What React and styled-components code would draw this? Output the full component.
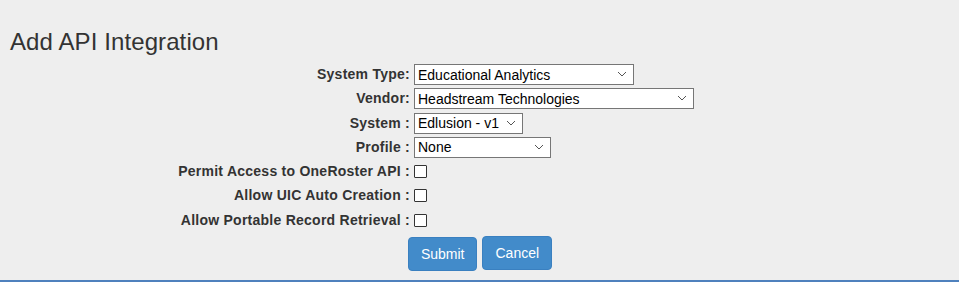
import React from "react";
import styled, { createGlobalStyle } from "styled-components";

const GlobalStyle = createGlobalStyle`
  html, body {
    margin: 0;
    padding: 0;
    background: #eeeeee;
  }
  * {
    box-sizing: border-box;
  }
`;

const selects = [
  { label: "System Type:", value: "Educational Analytics", width: 220 },
  { label: "Vendor:", value: "Headstream Technologies", width: 280 },
  { label: "System :", value: "Edlusion - v1", width: 109 },
  { label: "Profile :", value: "None", width: 137 },
];

const checks = [
  "Permit Access to OneRoster API :",
  "Allow UIC Auto Creation :",
  "Allow Portable Record Retrieval :",
];

const Chevron = () => (
  <svg width="10" height="6" viewBox="0 0 10 6">
    <path d="M1 1 L5 5 L9 1" fill="none" stroke="#555" strokeWidth="1" />
  </svg>
);

const App = () => {
  return (
    <Page>
      <GlobalStyle />
      <Title>Add API Integration</Title>
      <Form>
        {selects.map((s) => (
          <React.Fragment key={s.label}>
            <Label>{s.label}</Label>
            <Field>
              <SelectWrap $width={s.width}>
                <Select defaultValue={s.value}>
                  <option>{s.value}</option>
                </Select>
                <Arrow>
                  <Chevron />
                </Arrow>
              </SelectWrap>
            </Field>
          </React.Fragment>
        ))}
        {checks.map((c) => (
          <React.Fragment key={c}>
            <Label>{c}</Label>
            <Field>
              <Check type="checkbox" />
            </Field>
          </React.Fragment>
        ))}
      </Form>
      <Actions>
        <Button $drop>Submit</Button>
        <Button>Cancel</Button>
      </Actions>
    </Page>
  );
};

const Page = styled.div`
  height: 282px;
  background: #eeeeee;
  border-bottom: 2px solid #4f81bd;
  font-family: "Liberation Sans", Arial, sans-serif;
  color: #333;
`;
const Title = styled.h1`
  margin: 0;
  padding: 29px 0 0 10px;
  font-size: 24px;
  font-weight: 400;
  line-height: 26px;
  letter-spacing: 0.1px;
  color: #333;
`;
const Form = styled.div`
  display: grid;
  grid-template-columns: 410px 1fr;
  grid-auto-rows: 21px;
  column-gap: 4px;
  row-gap: 3.3px;
  margin-top: 9px;
`;
const Label = styled.div`
  text-align: right;
  font-size: 14px;
  font-weight: 700;
  line-height: 21px;
  letter-spacing: 0.25px;
  white-space: nowrap;
  color: #333;
`;
const Field = styled.div`
  display: flex;
  align-items: center;
`;
const SelectWrap = styled.span`
  position: relative;
  display: inline-block;
  width: ${(props) => props.$width}px;
  height: 21px;
`;
const Select = styled.select`
  appearance: none;
  width: 100%;
  height: 21px;
  margin: 0;
  padding: 0 20px 0 3px;
  border: 1px solid #767676;
  border-radius: 0;
  background: #fff;
  font-family: "Liberation Sans", Arial, sans-serif;
  font-size: 14px;
  color: #000;
  outline: none;
`;
const Arrow = styled.span`
  position: absolute;
  right: 7px;
  top: 7px;
  display: flex;
  pointer-events: none;
`;
const Check = styled.input`
  appearance: none;
  width: 13px;
  height: 13px;
  margin: 0;
  border: 1px solid #333;
  border-radius: 1px;
  background: #fff;
`;
const Actions = styled.div`
  display: flex;
  justify-content: center;
  align-items: flex-start;
  gap: 5px;
  margin-top: 5px;
  padding-left: 1px;
`;
const Button = styled.button`
  height: 34px;
  margin-top: ${(props) => (props.$drop ? "1px" : "0")};
  padding: 6px 12px;
  border: 1px solid #3a80c0;
  border-radius: 4px;
  background: #428bca;
  color: #fff;
  font-family: "Liberation Sans", Arial, sans-serif;
  font-size: 14px;
  line-height: 20px;
  cursor: pointer;
`;

export default App;
